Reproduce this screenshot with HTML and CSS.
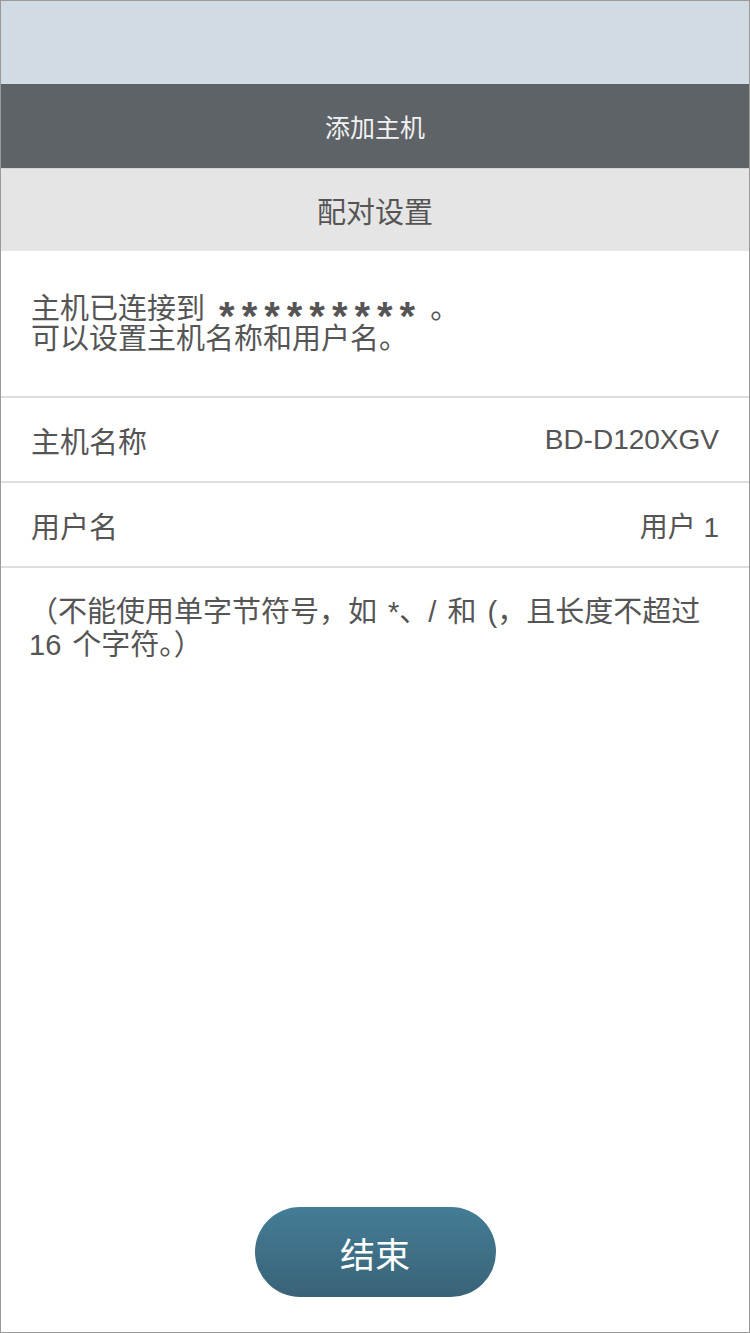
FILE: index.html
```html
<!DOCTYPE html>
<html lang="zh-CN">
<head>
  <meta charset="UTF-8" />
  <meta name="viewport" content="width=device-width, initial-scale=1.0" />
  <title>添加主机</title>
  <link rel="stylesheet" href="styles.css">
</head>
<body>

  <div class="screen">
    <div class="status-bar"></div>

    <header class="nav-bar">添加主机</header>
    <div class="section-title">配对设置</div>

    <div class="message">
      主机已连接到 <span class="mask">*********</span> 。<br>
      可以设置主机名称和用户名。
    </div>

    <div class="row">
      <span class="row-label">主机名称</span>
      <span class="row-value">BD-D120XGV</span>
    </div>
    <div class="row">
      <span class="row-label">用户名</span>
      <span class="row-value">用户 1</span>
    </div>

    <p class="note">（不能使用单字节符号，如 *、/ 和 (，且长度不超过<br>16 个字符。）</p>

    <div class="actions">
      <button type="button" class="btn-finish">结束</button>
    </div>
  </div>

</body>
</html>
```

FILE: styles.css
```css
body {
  margin: 0;
  font-family: "Liberation Sans", "Noto Sans CJK SC", sans-serif;
  background-color: #fff;
  color: #555;
}

.screen {
  display: flex;
  flex-direction: column;
  height: 1333px;
  box-sizing: border-box;
  border: 1px solid #9a9a9a;
  background-color: #fff;
}

.status-bar {
  height: 83px;
  background-color: #d0dbe3;
}

.nav-bar {
  height: 84px;
  display: flex;
  align-items: center;
  justify-content: center;
  background-color: #5e6367;
  color: #f2f2f2;
  font-size: 25px;
}

.section-title {
  height: 82px;
  display: flex;
  align-items: center;
  justify-content: center;
  background-color: #e5e5e5;
  border-top: 1px solid #d4d4d4;
  color: #555;
  font-size: 29px;
}

.message {
  padding: 43px 30px 42px;
  font-size: 29px;
  line-height: 30px;
  border-bottom: 2px solid #dedede;
}

.mask {
  margin-left: 6px;
  font-size: 40px;
  font-weight: bold;
  line-height: 0;
  letter-spacing: 7px;
  vertical-align: -11px;
}

.row {
  height: 83px;
  display: flex;
  align-items: center;
  justify-content: space-between;
  padding: 0 30px;
  font-size: 29px;
  border-bottom: 2px solid #dedede;
}

.row-value {
  font-size: 28px;
}

.note {
  margin: 0;
  padding: 28px 20px 0 28px;
  font-size: 29px;
  line-height: 33px;
  word-spacing: 3px;
}

.actions {
  margin-top: auto;
  display: flex;
  justify-content: center;
  padding-bottom: 35px;
}

.btn-finish {
  width: 241px;
  height: 90px;
  border: none;
  border-radius: 45px;
  background: linear-gradient(#447d96, #396377);
  color: #fff;
  font-family: "Liberation Sans", "Noto Sans CJK SC", sans-serif;
  font-size: 35px;
  cursor: pointer;
}
```
